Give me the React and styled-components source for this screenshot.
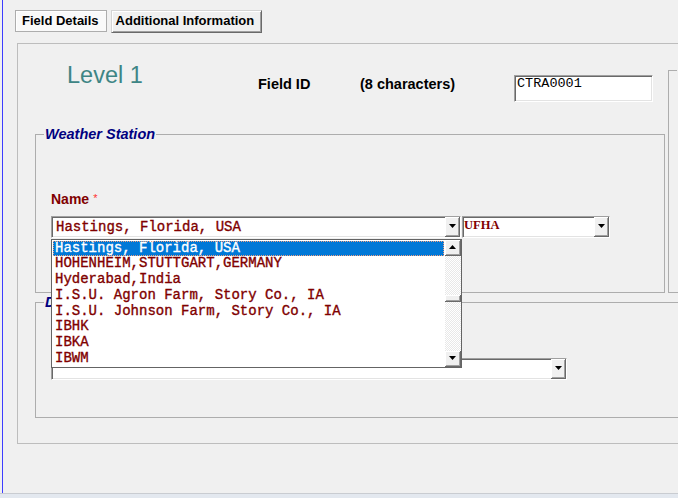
import React from 'react'
import styled, { createGlobalStyle } from 'styled-components'

const GlobalStyle = createGlobalStyle`
  html, body {
    margin: 0;
    padding: 0;
    background: #f0f0f0;
    overflow: hidden;
  }
  body {
    font-family: "Liberation Sans", Arial, sans-serif;
  }
`

const Window = styled.div`
  width: 678px;
  height: 498px;
  display: flex;
  flex-direction: column;
  overflow: hidden;
  background: #f0f0f0;
`
const Frame = styled.div`
  flex: 1;
  min-height: 0;
  margin-left: 2px;
  border-left: 1px solid #3d3dff;
  padding: 10px 0 0 12px;
  overflow: hidden;
`
const StatusStrip = styled.div`
  height: 4px;
  border-top: 1px solid #c9ccd1;
  background: #e3e8ef;
`

const TabBar = styled.div`
  display: flex;
  align-items: flex-start;
  gap: 4px;
  height: 23px;
`
const Tab = styled.div`
  box-sizing: border-box;
  height: ${p => (p.$active ? 22 : 23)}px;
  padding: 0 7px 0 ${p => (p.$active ? 6 : 4)}px;
  font-size: 13px;
  font-weight: bold;
  line-height: 20px;
  color: #000;
  white-space: nowrap;
  background: ${p => (p.$active ? '#f9f9f9' : '#f0f0f0')};
  border: 1px solid;
  border-color: ${p => (p.$active ? '#adadad' : '#d4d4d4 #6a6a6a #6a6a6a #d4d4d4')};
  box-shadow: ${p => (p.$active ? 'inset 1px 1px 0 #fff' : 'inset 1px 1px 0 #fff, inset -1px -1px 0 #a0a0a0')};
`

const Panel = styled.div`
  box-sizing: border-box;
  margin: 10px 0 0 2px;
  width: 800px;
  height: 401px;
  border: 1px solid #bdbdbd;
  padding-left: 17px;
  display: grid;
  grid-template-columns: 630px 120px;
  grid-template-rows: 83px 166px auto;
  column-gap: 3px;
  align-content: start;
`

const Header = styled.div`
  grid-column: 1;
  grid-row: 1;
  display: grid;
  grid-template-columns: 191px 102px 154px 139px;
  align-items: start;
  padding-left: 32px;
`
const LevelTitle = styled.div`
  margin-top: 20px;
  font-size: 23.5px;
  line-height: 1;
  color: #3e8585;
  white-space: nowrap;
`
const HeaderLabel = styled.div`
  margin-top: 33px;
  font-size: 14.5px;
  font-weight: bold;
  line-height: 1;
  color: #000;
  white-space: nowrap;
`

const Sunken = styled.div`
  box-sizing: border-box;
  width: ${p => p.$w}px;
  height: ${p => p.$h || 22}px;
  background: #fff;
  border: 1px solid;
  border-color: #a0a0a0 #fff #fff #a0a0a0;
  box-shadow: inset 1px 1px 0 #696969, inset -1px -1px 0 #e3e3e3;
  display: flex;
`
const IdInput = styled(Sunken)`
  margin-top: 31px;
  padding: 1px 0 0 2px;
  font: 13.5px/14px "Liberation Mono", "Courier New", monospace;
  color: #000;
`

const Group = styled.fieldset`
  box-sizing: border-box;
  margin: 0;
  padding: 0;
  min-width: 0;
  border: 1px solid #adadad;
`
const Legend = styled.legend`
  margin-left: 8px;
  padding: 0 1px;
  font: italic bold 14.5px/1 "Liberation Sans", Arial, sans-serif;
  color: ${p => p.$color || '#000080'};
  white-space: nowrap;
`
const WeatherGroup = styled(Group)`
  grid-column: 1;
  grid-row: 2;
  height: 166px;
`
const SideGroup = styled(Group)`
  grid-column: 2;
  grid-row: 1 / 3;
  margin-top: 19px;
`
const LowerGroup = styled(Group)`
  grid-column: 1 / -1;
  grid-row: 3;
  margin-top: 2px;
  height: 123px;
`
const GroupBody = styled.div`
  padding: ${p => p.$top}px 0 0 15px;
`

const NameLabel = styled.div`
  display: flex;
  align-items: flex-start;
  gap: 4px;
  margin-bottom: 10px;
  font-size: 14px;
  font-weight: bold;
  line-height: 1;
  color: #800000;
`
const Required = styled.span`
  margin-top: 1px;
  font-size: 11px;
  font-weight: normal;
  line-height: 1;
  color: #ff3333;
`

const ComboRow = styled.div`
  display: flex;
  gap: 1px;
`
const ComboWrap = styled.div`
  position: relative;
`
const Value = styled.div`
  flex: 1;
  min-width: 0;
  overflow: hidden;
  white-space: nowrap;
  color: #800000;
  padding-left: ${p => (p.$serif ? 1 : 4)}px;
  font: ${p => (p.$serif ? 'bold 12.5px/16px "Liberation Serif", "Times New Roman", serif' : '14px/20px "Liberation Mono", "Courier New", monospace')};
  -webkit-text-stroke: ${p => (p.$serif ? 0 : 0.35)}px currentColor;
`
const Bevel = styled.div`
  box-sizing: border-box;
  flex-shrink: 0;
  background: #f0f0f0;
  border-right: 1px solid #696969;
  border-bottom: 1px solid #696969;
  box-shadow: inset 1px 1px 0 #fff, inset -1px -1px 0 #a0a0a0;
  display: flex;
  align-items: center;
  justify-content: center;
`
const DropButton = styled(Bevel)`
  width: 15px;
  height: 20px;
`

const Arrow = ({ up }) => (
  <svg width="7" height="4" viewBox="0 0 7 4">
    <path d={up ? 'M0 4H7L3.5 0Z' : 'M0 0H7L3.5 4Z'} fill="#000" />
  </svg>
)

const Combo = ({ width, value, serif }) => (
  <Sunken $w={width}>
    <Value $serif={serif}>{value}</Value>
    <DropButton>
      <Arrow />
    </DropButton>
  </Sunken>
)

const ListPopup = styled.div`
  position: absolute;
  top: 23px;
  left: 0;
  z-index: 10;
  box-sizing: border-box;
  width: 411px;
  height: 129px;
  background: #fff;
  border: 1px solid #646464;
  display: flex;
`
const Items = styled.div`
  flex: 1;
  padding-top: 1px;
`
const Item = styled.div`
  height: 15.75px;
  margin: 0 1px;
  padding-left: 2px;
  font: 14px/15.75px "Liberation Mono", "Courier New", monospace;
  -webkit-text-stroke: 0.35px currentColor;
  white-space: nowrap;
  overflow: hidden;
  color: ${p => (p.$selected ? '#fff' : '#800000')};
  background: ${p => (p.$selected ? '#0078d7' : 'transparent')};
  outline: ${p => (p.$selected ? '1px dotted #f0a080' : 'none')};
  outline-offset: -1px;
`
const ScrollBar = styled.div`
  width: 16px;
  display: flex;
  flex-direction: column;
`
const ScrollButton = styled(Bevel)`
  width: 16px;
  height: 16px;
`
const Track = styled.div`
  flex: 1;
  background: repeating-conic-gradient(#ffffff 0 25%, #e8e8e8 0 50%) 0 0 / 2px 2px;
`
const Thumb = styled(Bevel)`
  width: 16px;
  height: 7px;
  margin-top: ${p => p.$offset}px;
`

const stations = [
  'Hastings, Florida, USA',
  'HOHENHEIM,STUTTGART,GERMANY',
  'Hyderabad,India',
  'I.S.U. Agron Farm, Story Co., IA',
  'I.S.U. Johnson Farm, Story Co., IA',
  'IBHK',
  'IBKA',
  'IBWM',
]

export default function App() {
  return (
    <>
      <GlobalStyle />
      <Window>
        <Frame>
          <TabBar>
            <Tab $active>Field Details</Tab>
            <Tab>Additional Information</Tab>
          </TabBar>
          <Panel>
            <Header>
              <LevelTitle>Level 1</LevelTitle>
              <HeaderLabel>Field ID</HeaderLabel>
              <HeaderLabel>(8 characters)</HeaderLabel>
              <IdInput $w={139} $h={27}>CTRA0001</IdInput>
            </Header>

            <WeatherGroup>
              <Legend>Weather Station</Legend>
              <GroupBody $top={50}>
                <NameLabel>
                  Name<Required>*</Required>
                </NameLabel>
                <ComboRow>
                  <ComboWrap>
                    <Combo width={410} value="Hastings, Florida, USA" />
                    <ListPopup>
                      <Items>
                        {stations.map((s, i) => (
                          <Item key={s} $selected={i === 0}>{s}</Item>
                        ))}
                      </Items>
                      <ScrollBar>
                        <ScrollButton>
                          <Arrow up />
                        </ScrollButton>
                        <Track>
                          <Thumb $offset={39} />
                        </Track>
                        <ScrollButton>
                          <Arrow />
                        </ScrollButton>
                      </ScrollBar>
                    </ListPopup>
                  </ComboWrap>
                  <Combo width={148} value="UFHA" serif />
                </ComboRow>
              </GroupBody>
            </WeatherGroup>

            <SideGroup>
              <Legend $color="#800000">Soil</Legend>
            </SideGroup>

            <LowerGroup>
              <Legend>Drainage</Legend>
              <GroupBody $top={48}>
                <Combo width={516} value="" />
              </GroupBody>
            </LowerGroup>
          </Panel>
        </Frame>
        <StatusStrip />
      </Window>
    </>
  )
}
